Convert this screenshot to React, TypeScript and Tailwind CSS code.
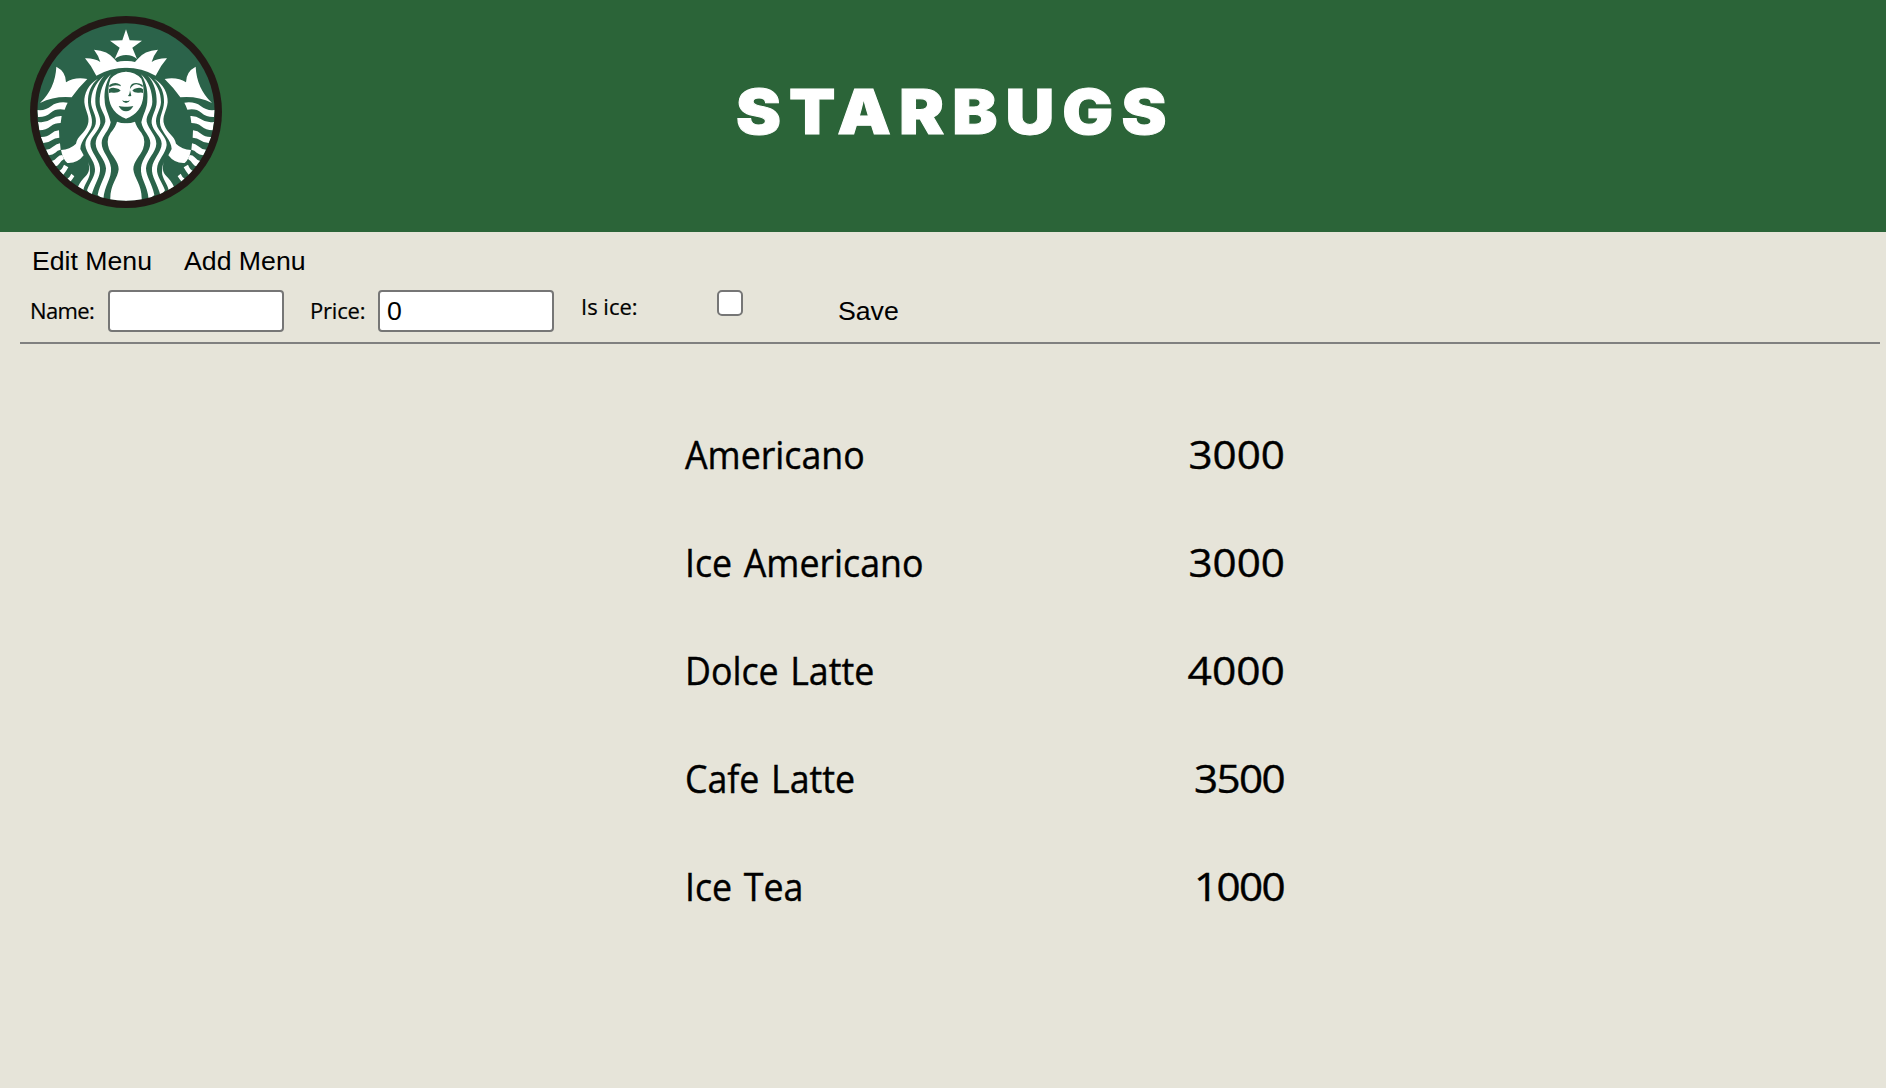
import React, { useState } from "react";

type MenuItem = { name: string; price: number; priceClass: string };

const MENU: MenuItem[] = [
  { name: "Americano", price: 3000, priceClass: "scale-x-[1.11]" },
  { name: "Ice Americano", price: 3000, priceClass: "scale-x-[1.11]" },
  { name: "Dolce Latte", price: 4000, priceClass: "scale-x-[1.12]" },
  { name: "Cafe Latte", price: 3500, priceClass: "mr-[1.5px] scale-x-[1.11] tracking-[-1.5px]" },
  { name: "Ice Tea", price: 1000, priceClass: "mr-[1.5px] scale-x-[1.11] tracking-[-1.5px]" },
];

const GREEN = "#2b634a";

/** One half of the emblem; the other half is its mirror image. */
function LogoHalf() {
  return (
    <g fill="#fff">
      {/* crown */}
      <path d="M319 168 Q304 167 291 171 L283 162 Q264 137 222 134 Q236 152 241 171 Q222 159 195 160 Q215 183 229 212 Q270 188 319 188Z" />
      {/* tail fin */}
      <path d="M109 185 Q138 200 138 232 Q164 215 202 222 Q176 247 155 277 Q105 272 60 294 Q106 250 109 185Z" />
      {/* tail scales */}
      <path d="M52 315 Q76 318 94 303 Q112 289 143 293 Q138 302 134 314 Q108 309 92 323 Q76 337 54 336Z" />
      <path d="M54 351 Q76 355 94 342 Q108 332 125 333 L122 354 Q104 354 92 364 Q78 376 58 376Z" />
      <path d="M62 396 Q80 397 92 387 Q103 377 117 376 L118 398 Q104 398 95 406 Q85 414 70 414Z" />
      <path d="M78 434 Q92 433 101 424 Q110 416 120 415 L122 434 Q112 436 106 443 Q98 450 86 451Z" />
      <path d="M95 468 Q106 465 112 457 Q118 450 127 450 L132 462 Q122 468 117 477 Q112 484 106 484Z" />
      <path d="M116 498 Q126 495 132 479 L145 487 Q138 500 130 509Z" />
      <path d="M142 521 Q150 516 154 506 L163 514 Q157 524 151 530Z" />
      {/* cuff and outer lock */}
      <path d="M234 221 C205 237 192 265 193 292 C195 318 212 335 203 360 C195 385 172 392 168 416 Q150 434 123 435 Q128 462 142 474 Q172 476 191 451 L181 432 C182 405 208 387 215 361 C220 335 205 320 204 292 C203 265 212 240 234 221Z" />
      {/* middle locks */}
      <path d="M252 212 C225 235 213 262 213 292 C214 315 232 333 227 357 C222 380 195 395 196 420 C198 445 224 465 225 492 C226 515 210 530 201 556 L214 574 C222 537 243 515 240 488 C236 460 211 440 211 416 C211 395 237 380 241 355 C243 332 226 315 226 290 C226 262 232 235 252 212Z" />
      <path d="M273 208 C248 230 239 262 239 290 C239 315 259 328 256 350 C250 375 227 390 227 416 C228 442 256 462 258 490 C258 515 240 535 233 570 L250 584 C253 540 276 520 273 488 C270 460 245 440 245 414 C245 392 268 378 272 352 C266 325 254 310 254 285 C252 262 256 235 273 208Z" />
      <path d="M205 470 C209 490 208 500 200 510 C186 525 180 532 174 546 L190 556 C192 540 210 520 210 502 Q210 484 205 470Z" />
      {/* torso */}
      <path d="M319 355 Q302 355 291 350 Q287 366 272 383 Q257 403 267 432 C275 452 296 470 296 493 C294 520 268 540 271 590 L319 592Z" />
      {/* face */}
      <path d="M319 200 Q291 200 272 221 Q263 243 266 272 Q270 324 319 341Z" />
    </g>
  );
}

function Logo() {
  return (
    <svg viewBox="30 33 576 576" className="size-48 shrink-0" aria-label="Starbugs">
      <defs>
        <clipPath id="disc">
          <circle cx="318" cy="321" r="266" />
        </clipPath>
      </defs>
      <circle cx="318" cy="321" r="288" fill="#231916" />
      <circle cx="318" cy="321" r="266" fill={GREEN} />
      <g clipPath="url(#disc)">
        <LogoHalf />
        <g transform="translate(636 0) scale(-1 1)">
          <LogoHalf />
        </g>
        <path
          d="M318 73 L329 106 L366 107 L337 128 L351 162 Q338 150 318 150 Q300 150 284 162 L299 128 L270 107 L307 106Z"
          fill="#fff"
        />
      </g>
      {/* facial features */}
      <g fill={GREEN}>
        <path d="M268 240 Q286 229 301 239 L303 244 Q286 236 268 247Z" />
        <path d="M368 240 Q350 229 336 237 Q329 243 330 256 L334 272 Q328 275 324 272 Q330 268 330 252 Q338 238 350 238 Q360 239 368 247Z" />
        <path d="M267 253 Q276 246 288 250 Q298 251 302 257 Q294 264 280 263 Q271 261 267 264Z" />
        <path d="M369 253 Q361 246 349 250 Q341 251 337 257 Q343 264 357 263 Q365 261 369 264Z" />
        <path d="M306 286 Q312 289 318 287 Q324 289 330 286 Q326 294 318 294 Q310 294 306 286Z" />
        <path d="M296 303 Q308 306 318 305 Q328 306 340 303 Q332 319 318 319 Q304 319 296 303Z" />
      </g>
    </svg>
  );
}

const inputClass =
  "h-[42px] w-44 rounded-[4px] border-2 border-[#767676] bg-white px-[7px] font-['Liberation_Sans',Arial,sans-serif] text-[26.67px] leading-none outline-none";
const buttonClass = "font-['Liberation_Sans',Arial,sans-serif] text-[26.67px] leading-[30px]";
const labelClass = "shrink-0 whitespace-nowrap text-[22px] [-webkit-text-stroke:0.2px_black]";

export default function App() {
  const [name, setName] = useState("");
  const [price, setPrice] = useState("0");
  const [isIce, setIsIce] = useState(false);

  return (
    <div className="flex min-h-screen flex-col bg-[#e6e4d9] font-['Open_Sans','Noto_Sans',sans-serif] text-black">
      <header className="flex h-[232px] items-start bg-[#2b6438] pt-4 pl-[30px]">
        <Logo />
        <h1 className="ml-[514px] h-48 origin-left scale-x-[1.09] font-['Inter',sans-serif] text-[62px] leading-[192px] font-black tracking-[7.4px] text-white [-webkit-text-stroke:1px_white]">
          STARBUGS
        </h1>
      </header>

      <nav className="flex h-[58px] items-start gap-8 pt-3.5 pl-8">
        <button className={buttonClass}>Edit Menu</button>
        <button className={buttonClass}>Add Menu</button>
      </nav>

      <form
        className="mr-1.5 ml-5 flex h-[54px] items-start border-b-2 border-[#808080] pl-2"
        onSubmit={(e) => e.preventDefault()}
      >
        <label className="flex items-start">
          <span className={`${labelClass} w-20 pl-0.5 leading-10 tracking-[-0.6px]`}>Name:</span>
          <input className={inputClass} value={name} onChange={(e) => setName(e.target.value)} />
        </label>
        <label className="ml-6 flex items-start">
          <span className={`${labelClass} w-[70px] pl-0.5 leading-10 tracking-[-0.2px]`}>Price:</span>
          <input className={inputClass} value={price} onChange={(e) => setPrice(e.target.value)} />
        </label>
        <label className="ml-6 flex items-start">
          <span className={`${labelClass} w-[139px] pl-[3px] leading-[33px]`}>Is ice:</span>
          <input
            type="checkbox"
            className="size-[26px] appearance-none rounded-[5px] border-2 border-[#767676] bg-white checked:bg-blue-600"
            checked={isIce}
            onChange={(e) => setIsIce(e.target.checked)}
          />
        </label>
        <button className={`${buttonClass} mt-1.5 ml-[95px]`}>Save</button>
      </form>

      <ul className="mt-14 ml-[685px] w-[600px] [-webkit-text-stroke:0.4px_black]">
        {MENU.map((item) => (
          <li key={item.name} className="flex h-[108px] items-center justify-between text-[38px] leading-none">
            <span className="origin-left scale-x-[0.94] [word-spacing:2.5px]">{item.name}</span>
            <span className={`origin-right ${item.priceClass}`}>{item.price}</span>
          </li>
        ))}
      </ul>
    </div>
  );
}
